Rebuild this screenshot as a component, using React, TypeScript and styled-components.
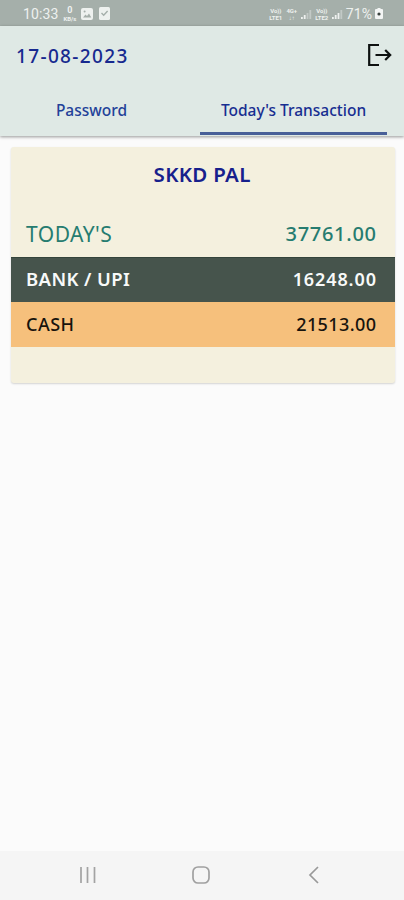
import React from "react";
import styled, { createGlobalStyle } from "styled-components";

const GlobalStyle = createGlobalStyle`
  * { box-sizing: border-box; }
  body { margin: 0; background: #fbfbfb; font-family: "Noto Sans", sans-serif; }
`;

const Screen = styled.div`
  width: 404px;
  height: 900px;
  display: flex;
  flex-direction: column;
  background: #fbfbfb;
  overflow: hidden;
`;

const StatusBar = styled.div`
  height: 26px;
  flex: none;
  display: flex;
  justify-content: space-between;
  align-items: center;
  padding: 1px 21px 0 23px;
  background: #a5afaa;
  color: #eef1ef;
  font-family: Roboto, sans-serif;
`;

const StatusGroup = styled.div<{ $gap: number }>`
  display: flex;
  align-items: center;
  gap: ${(p) => p.$gap}px;
`;

const StatusText = styled.span`
  font-size: 14px;
  line-height: 16px;
  letter-spacing: 0.1px;
`;

const Stack = styled.span<{ $width: number; $top?: number }>`
  width: ${(p) => p.$width}px;
  display: flex;
  flex-direction: column;
  align-items: center;
  font-size: 6px;
  line-height: 7px;
  font-weight: 700;
  letter-spacing: -0.1px;
  white-space: nowrap;

  > span:first-child {
    font-size: ${(p) => p.$top ?? 6}px;
    line-height: ${(p) => p.$top ?? 7}px;
  }
`;

const Header = styled.header`
  height: 110px;
  flex: none;
  display: flex;
  flex-direction: column;
  background: #dfe9e5;
  box-shadow: 0 1px 3px rgba(0, 0, 0, 0.4);
`;

const TitleRow = styled.div`
  height: 60px;
  display: flex;
  align-items: center;
  justify-content: space-between;
  padding: 0 11px 0 16px;

  > svg {
    margin-bottom: 2px;
  }
`;

const Text = styled.span<{ $size: number; $weight: number; $color: string; $spacing: number }>`
  font-size: ${(p) => p.$size}px;
  font-weight: ${(p) => p.$weight};
  color: ${(p) => p.$color};
  letter-spacing: ${(p) => p.$spacing}px;
  margin-right: ${(p) => -p.$spacing}px;
  line-height: 24px;
  white-space: nowrap;
`;

const Tabs = styled.nav`
  height: 49px;
  display: grid;
  grid-template-columns: 183px 187px;
  column-gap: 17px;
`;

const Tab = styled.div<{ $active?: boolean }>`
  display: flex;
  justify-content: center;
  padding-top: 12px;
  border-bottom: 3px solid ${(p) => (p.$active ? "#485f98" : "transparent")};
`;

const Card = styled.section`
  width: 384px;
  height: 236px;
  flex: none;
  margin: 11px 0 0 11px;
  border-radius: 3px;
  background: #f4f0de;
  box-shadow: 0 1px 2px rgba(0, 0, 0, 0.16);
`;

const CardTitle = styled.div`
  height: 64px;
  display: flex;
  justify-content: center;
  padding: 15px 2px 0 0;
`;

const Row = styled.div<{ $height: number; $bg?: string; $edge?: string }>`
  height: ${(p) => p.$height}px;
  display: flex;
  align-items: center;
  justify-content: space-between;
  padding: 0 19px 1px 15px;
  background: ${(p) => p.$bg ?? "transparent"};
  box-shadow: ${(p) => (p.$edge ? `inset 0 1px 0 ${p.$edge}` : "none")};
`;

const NavBar = styled.footer`
  height: 49px;
  flex: none;
  margin-top: auto;
  display: flex;
  align-items: center;
  justify-content: space-between;
  padding: 0 83px 2px 78px;
  background: #f5f5f5;
`;

const HomeIcon = styled.svg`
  margin-right: 4px;
`;

const Signal = ({ bars }: { bars: number }) => (
  <svg width="11" height="10" viewBox="0 0 11 10" fill="#eef1ef">
    {[2, 4, 6, 9].map((h, i) => (
      <rect key={h} x={i * 2.8} y={10 - h} width="1.8" height={h} opacity={i < bars ? 1 : 0.4} />
    ))}
  </svg>
);

export default function App() {
  return (
    <>
      <GlobalStyle />
      <Screen>
        <StatusBar>
          <StatusGroup $gap={5}>
            <StatusText>10:33</StatusText>
            <Stack $width={13} $top={9}>
              <span>0</span>
              <span>KB/s</span>
            </Stack>
            <svg width="12" height="12" viewBox="0 0 12 12">
              <rect width="12" height="12" rx="2" fill="#eef1ef" />
              <path d="M2 9.5 4.5 6.5 6 8 8 5.5 10.3 9.5z" fill="#a5afaa" />
              <circle cx="3.6" cy="3.6" r="1" fill="#a5afaa" />
            </svg>
            <svg width="12" height="13" viewBox="0 0 12 13">
              <rect x="1" width="11" height="13" rx="1.5" fill="#eef1ef" />
              <path d="m3.5 6 2.2 2.2L9.6 4" fill="none" stroke="#a5afaa" strokeWidth="1.4" />
            </svg>
          </StatusGroup>
          <StatusGroup $gap={3}>
            <Stack $width={14}>
              <span>Vo))</span>
              <span>LTE1</span>
            </Stack>
            <Stack $width={12}>
              <span>4G+</span>
              <span>↓↑</span>
            </Stack>
            <Signal bars={2} />
            <Stack $width={14}>
              <span>Vo))</span>
              <span>LTE2</span>
            </Stack>
            <Signal bars={3} />
            <StatusText>71%</StatusText>
            <svg width="8" height="11" viewBox="0 0 8 11">
              <path d="M2.5 0h3v1H7a1 1 0 0 1 1 1v8a1 1 0 0 1-1 1H1a1 1 0 0 1-1-1V2a1 1 0 0 1 1-1h1.500z" fill="#f3f5f4" />
              <circle cx="4" cy="6" r="1.6" fill="#3c4441" />
            </svg>
          </StatusGroup>
        </StatusBar>
        <Header>
          <TitleRow>
            <Text $size={19} $weight={500} $color="#17298f" $spacing={1.35}>17-08-2023</Text>
            <svg width="26" height="24" viewBox="0 0 26 24" fill="none" stroke="#0d1110" strokeWidth="2.200">
              <path d="M12 2H2.200v20H12" />
              <path d="M8.500 12H23M18.200 7l5 5-5 5" />
            </svg>
          </TitleRow>
          <Tabs>
            <Tab>
              <Text $size={15.5} $weight={500} $color="#234199" $spacing={0}>Password</Text>
            </Tab>
            <Tab $active>
              <Text $size={15.5} $weight={500} $color="#172e91" $spacing={0}>Today's Transaction</Text>
            </Tab>
          </Tabs>
        </Header>
        <Card>
          <CardTitle>
            <Text $size={20.5} $weight={600} $color="#17208c" $spacing={0.3}>SKKD PAL</Text>
          </CardTitle>
          <Row $height={46}>
            <Text $size={21} $weight={400} $color="#267c70" $spacing={0.5}>TODAY'S</Text>
            <Text $size={20} $weight={500} $color="#267c70" $spacing={0.7}>37761.00</Text>
          </Row>
          <Row $height={45} $bg="#46544c" $edge="#34443b">
            <Text $size={18.5} $weight={600} $color="#f8faf9" $spacing={0.4}>BANK / UPI</Text>
            <Text $size={18} $weight={600} $color="#f8faf9" $spacing={0.9}>16248.00</Text>
          </Row>
          <Row $height={45} $bg="#f6c07c">
            <Text $size={18} $weight={500} $color="#17130d" $spacing={0.5}>CASH</Text>
            <Text $size={18} $weight={500} $color="#17130d" $spacing={0.4}>21513.00</Text>
          </Row>
        </Card>
        <NavBar>
          <svg width="20" height="18" viewBox="0 0 20 18" stroke="#a3a3a3" strokeWidth="1.700">
            <path d="M3 1v16M9.500 1v16M16.500 1v16" />
          </svg>
          <HomeIcon width="20" height="20" viewBox="0 0 20 20" fill="none" stroke="#a0a0a0" strokeWidth="1.700">
            <rect x="2" y="2" width="16" height="16" rx="5" />
          </HomeIcon>
          <svg width="14" height="18" viewBox="0 0 14 18" fill="none" stroke="#999" strokeWidth="1.700">
            <path d="M11 1 3 9l8 8" />
          </svg>
        </NavBar>
      </Screen>
    </>
  );
}
